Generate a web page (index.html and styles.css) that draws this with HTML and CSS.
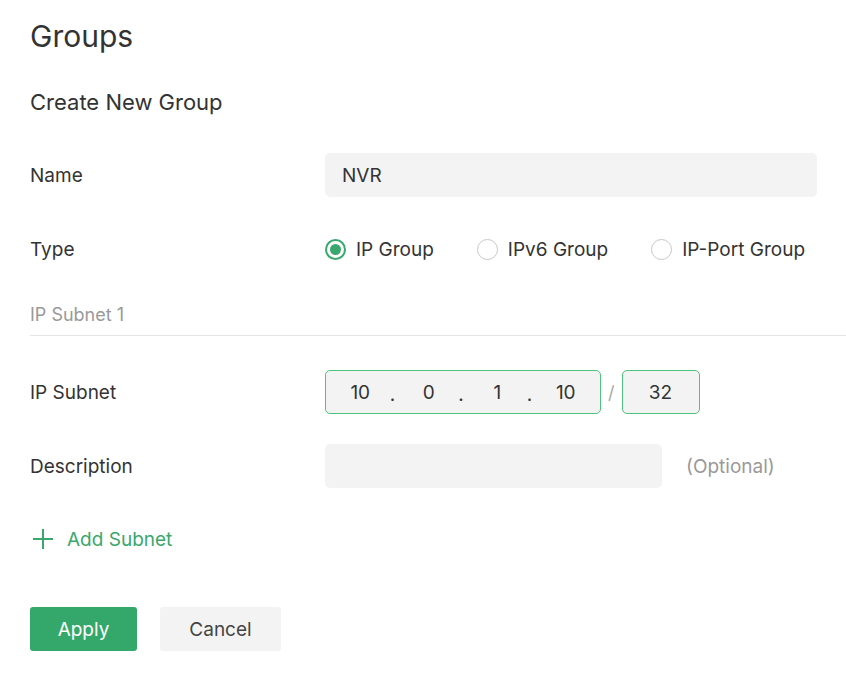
FILE: index.html
```html
<!DOCTYPE html>
<html lang="en">
<head>
    <meta charset="UTF-8" />
    <title>Groups</title>
    <link rel="stylesheet" href="styles.css">
</head>
<body>
    <div class="page">
        <h1 class="title">Groups</h1>
        <h2 class="subtitle">Create New Group</h2>

        <div class="row row-name">
            <div class="label">Name</div>
            <div class="field text-field wide">NVR</div>
        </div>

        <div class="row row-type">
            <div class="label">Type</div>
            <div class="radios">
                <label class="radio checked"><span class="dot"></span>IP Group</label>
                <label class="radio"><span class="dot"></span>IPv6 Group</label>
                <label class="radio"><span class="dot"></span>IP-Port Group</label>
            </div>
        </div>

        <div class="section">IP Subnet 1</div>

        <div class="row row-subnet">
            <div class="label">IP Subnet</div>
            <div class="field ip-field">
                <span class="octet">10</span><span class="sep">.</span>
                <span class="octet">0</span><span class="sep">.</span>
                <span class="octet">1</span><span class="sep">.</span>
                <span class="octet">10</span>
            </div>
            <span class="slash">/</span>
            <div class="field mask-field">32</div>
        </div>

        <div class="row row-desc">
            <div class="label">Description</div>
            <div class="field text-field medium"></div>
            <span class="hint">(Optional)</span>
        </div>

        <div class="add-link">
            <svg width="22" height="22" viewBox="0 0 22 22"><path d="M11 1v20M1 11h20" stroke="#3aa76d" stroke-width="2" fill="none"/></svg>
            <span>Add Subnet</span>
        </div>

        <div class="actions">
            <button class="btn btn-apply">Apply</button>
            <button class="btn btn-cancel">Cancel</button>
        </div>
    </div>
</body>
</html>
```
FILE: styles.css
```css
body {
    margin: 0;
    background: #fff;
    font-family: Inter, "Noto Sans", sans-serif;
    color: #333;
}

.page {
    padding: 16px 0 0 30px;
}

.title {
    margin: 0;
    font-size: 30px;
    font-weight: 400;
    line-height: 40px;
}

.subtitle {
    margin: 32px 0 0 0;
    font-size: 22px;
    font-weight: 400;
    line-height: 28px;
}

.row {
    display: flex;
    align-items: center;
}

.label {
    width: 295px;
    flex-shrink: 0;
    font-size: 19px;
}

.row-name { margin-top: 37px; }
.row-type { margin-top: 40px; height: 24px; }
.row-subnet { margin-top: 34px; }
.row-desc { margin-top: 30px; }

.field {
    height: 44px;
    box-sizing: border-box;
    background: #f3f3f3;
    border-radius: 5px;
    font-size: 19px;
    display: flex;
    align-items: center;
}

.text-field {
    padding: 0 17px;
}

.wide { width: 492px; }
.medium { width: 337px; }

.radios {
    display: flex;
    gap: 43px;
    white-space: nowrap;
}

.radio {
    display: flex;
    align-items: center;
    font-size: 19px;
}

.radio .dot {
    flex-shrink: 0;
    width: 21px;
    height: 21px;
    box-sizing: border-box;
    border: 1px solid #c8c8c8;
    border-radius: 50%;
    margin-right: 10px;
    position: relative;
}

.radio.checked .dot {
    border: 2px solid #3aa76d;
}

.radio.checked .dot::after {
    content: "";
    position: absolute;
    left: 3px;
    top: 3px;
    width: 11px;
    height: 11px;
    border-radius: 50%;
    background: #3aa76d;
}

.section {
    margin-top: 42px;
    font-size: 18px;
    color: #999;
    line-height: 24px;
    padding-bottom: 8px;
    border-bottom: 1px solid #e6e6e6;
}

.ip-field {
    width: 276px;
    border: 1px solid #4cc47e;
}

.octet {
    flex: 1;
    text-align: center;
}

.sep {
    width: 0;
    display: flex;
    justify-content: center;
    position: relative;
    top: 2px;
    left: -2px;
}

.slash {
    color: #aaa;
    font-size: 18px;
    margin: 0 7px 0 7px;
}

.mask-field {
    width: 78px;
    border: 1px solid #4cc47e;
    justify-content: center;
}

.hint {
    margin-left: 24px;
    color: #999;
    font-size: 19px;
}

.add-link {
    margin-top: 39px;
    display: flex;
    align-items: center;
    height: 24px;
    color: #3aa76d;
    font-size: 19px;
}

.add-link svg {
    margin: 0 13px 0 2px;
}

.actions {
    margin-top: 56px;
    display: flex;
    gap: 23px;
}

.btn {
    height: 44px;
    border: none;
    border-radius: 3px;
    font-family: Inter, "Noto Sans", sans-serif;
    font-size: 19px;
}

.btn-apply {
    width: 107px;
    background: #34a86a;
    color: #fff;
}

.btn-cancel {
    width: 121px;
    background: #f3f3f3;
    color: #444;
}
```
